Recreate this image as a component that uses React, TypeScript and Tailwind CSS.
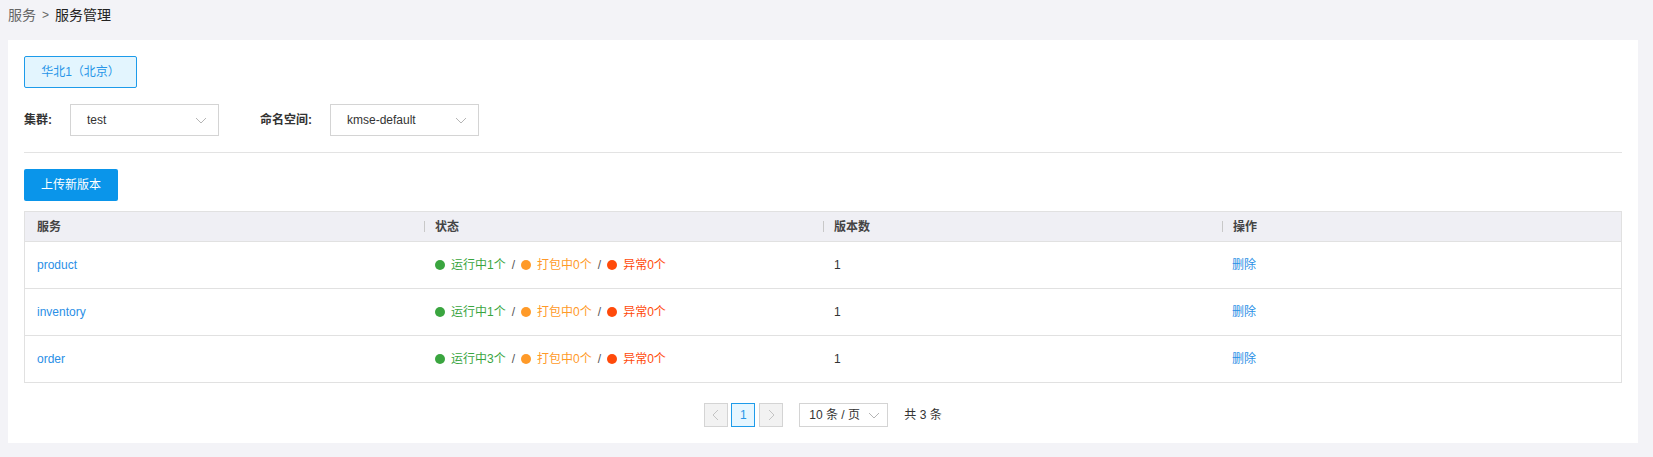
import React from 'react';

const FONT = "font-['Liberation_Sans','Noto_Sans_CJK_SC',sans-serif]";

const ROWS = [
  { name: 'product', running: 1, packing: 0, error: 0, versions: 1 },
  { name: 'inventory', running: 1, packing: 0, error: 0, versions: 1 },
  { name: 'order', running: 3, packing: 0, error: 0, versions: 1 },
];

function Chevron({ dir = 'down', color = '#b5b5b5' }: { dir?: 'down' | 'left' | 'right'; color?: string }) {
  const pts =
    dir === 'down' ? '1,4 6,9 11,4' : dir === 'left' ? '8,1 3,6 8,11' : '4,1 9,6 4,11';
  return (
    <svg width="12" height="12" viewBox="0 0 12 12" fill="none">
      <polyline points={pts} stroke={color} strokeWidth="1" />
    </svg>
  );
}

function Select({ value, width }: { value: string; width: string }) {
  return (
    <div className={`${width} h-8 border border-[#d4d4d4] flex items-center justify-between pl-4 pr-[11px] text-xs text-[#333]`}>
      <span>{value}</span>
      <Chevron />
    </div>
  );
}

function Sep() {
  return <span className="w-px h-[11px] bg-[#c8c8c8] mr-[10px]" />;
}

export default function App() {
  return (
    <div className={`${FONT} min-h-[457px] bg-[#f3f3f7] pr-[15px] pl-2 pb-[14px]`}>
      {/* breadcrumb */}
      <div className="h-[30px] flex items-center text-sm text-[#666] gap-[6px]">
        <span>服务</span>
        <span className="text-xs">&gt;</span>
        <span className="text-[#222]">服务管理</span>
      </div>

      <div className="mt-[10px] bg-white p-4 h-[403px]">
        <button className="w-[113px] h-8 border border-[#1d9bea] bg-[#e3f5fe] text-[#2896e8] text-xs rounded-[2px]">
          华北1（北京）
        </button>

        {/* filters */}
        <div className="mt-4 flex items-center text-xs">
          <span className="font-bold text-[#333] w-[46px]">集群:</span>
          <Select value="test" width="w-[149px]" />
          <span className="font-bold text-[#333] ml-[41px] w-[70px]">命名空间:</span>
          <Select value="kmse-default" width="w-[149px]" />
        </div>

        <div className="mt-4 h-px bg-[#e3e3e3]" />

        <button className="mt-4 w-[94px] h-8 bg-[#0a95ea] text-white text-xs rounded-[2px]">
          上传新版本
        </button>

        {/* table */}
        <div className="mt-[10px] border border-[#e1e1e1] text-xs">
          <div className="grid grid-cols-4 h-[30px] bg-[#efeff4] border-b border-[#e1e1e1] font-bold text-[#444]">
            <div className="flex items-center pl-3">服务</div>
            <div className="flex items-center">
              <Sep />
              状态
            </div>
            <div className="flex items-center">
              <Sep />
              版本数
            </div>
            <div className="flex items-center">
              <Sep />
              操作
            </div>
          </div>
          {ROWS.map((r, i) => (
            <div
              key={r.name}
              className={`grid grid-cols-4 ${
                i < ROWS.length - 1 ? 'h-[47px] border-b border-[#e1e1e1]' : 'h-[46px]'
              }`}
            >
              <div className="flex items-center pl-3 text-[#2b8fe6]">{r.name}</div>
              <div className="flex items-center pl-[11px] gap-[6px]">
                <span className="w-[10px] h-[10px] rounded-full bg-[#3aa53f]" />
                <span className="text-[#3aa53f]">运行中{r.running}个</span>
                <span className="text-[#555]">/</span>
                <span className="w-[10px] h-[10px] rounded-full bg-[#ff9a28]" />
                <span className="text-[#ff9a28]">打包中{r.packing}个</span>
                <span className="text-[#555]">/</span>
                <span className="w-[10px] h-[10px] rounded-full bg-[#ff4a0a]" />
                <span className="text-[#ff4a0a]">异常{r.error}个</span>
              </div>
              <div className="flex items-center pl-[11px] text-[#333]">{r.versions}</div>
              <div className="flex items-center pl-[10px] text-[#2b8fe6]">删除</div>
            </div>
          ))}
        </div>

        {/* pagination */}
        <div className="mt-[20px] flex items-center justify-center text-xs">
          <div className="w-6 h-6 bg-[#f2f2f2] border border-[#d4d4d4] flex items-center justify-center">
            <Chevron dir="left" color="#c4c4c4" />
          </div>
          <div className="ml-[3px] w-6 h-6 bg-[#e6f6ff] border border-[#1d9bea] flex items-center justify-center text-[#2896e8]">
            1
          </div>
          <div className="ml-[4px] w-6 h-6 bg-[#f2f2f2] border border-[#d4d4d4] flex items-center justify-center">
            <Chevron dir="right" color="#c4c4c4" />
          </div>
          <div className="ml-4 w-[89px] h-6 border border-[#d4d4d4] flex items-center justify-between pl-[9px] pr-[7px] text-[#333]">
            <span>10 条 / 页</span>
            <Chevron />
          </div>
          <span className="ml-4 text-[#333]">共 3 条</span>
        </div>
      </div>
    </div>
  );
}
